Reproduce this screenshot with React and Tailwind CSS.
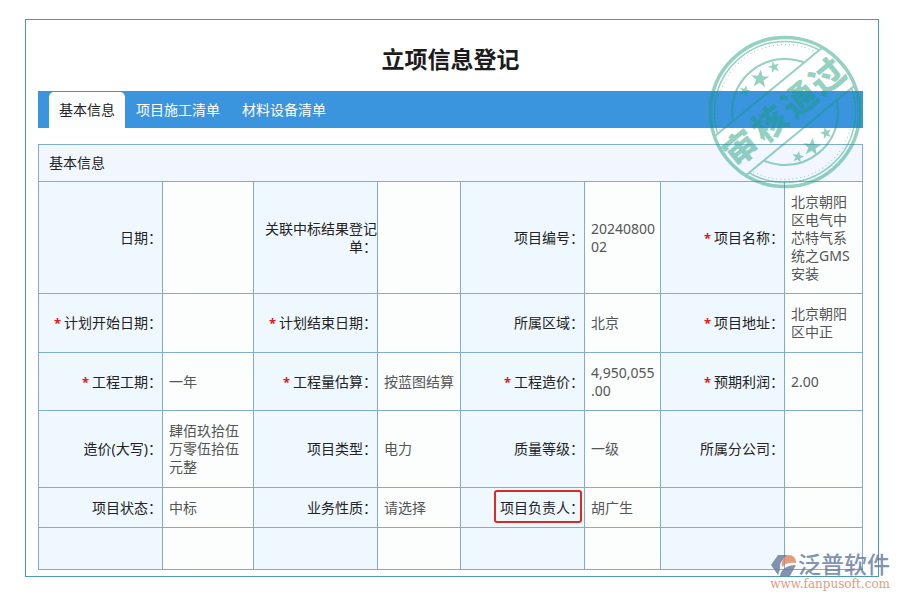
const tabs = ["基本信息", "项目施工清单", "材料设备清单"];

// each row holds four label / value pairs
const rows = [
  {
    height: "h-[112px]",
    cells: [
      { label: "日期：", value: "" },
      { label: "关联中标结果登记单：", value: "" },
      { label: "项目编号：", value: "2024080002" },
      { label: "项目名称：", value: "北京朝阳区电气中芯特气系统之GMS安装", required: true },
    ],
  },
  {
    height: "h-[59px]",
    cells: [
      { label: "计划开始日期：", value: "", required: true },
      { label: "计划结束日期：", value: "", required: true },
      { label: "所属区域：", value: "北京" },
      { label: "项目地址：", value: "北京朝阳区中正", required: true },
    ],
  },
  {
    height: "h-[58px]",
    cells: [
      { label: "工程工期：", value: "一年", required: true },
      { label: "工程量估算：", value: "按蓝图结算", required: true },
      // zero-width space lets the decimals drop to the next line
      { label: "工程造价：", value: "4,950,055\u200b.00", required: true },
      { label: "预期利润：", value: "2.00", required: true },
    ],
  },
  {
    height: "h-[77px]",
    cells: [
      { label: "造价(大写)：", value: "肆佰玖拾伍万零伍拾伍元整" },
      { label: "项目类型：", value: "电力" },
      { label: "质量等级：", value: "一级" },
      { label: "所属分公司：", value: "" },
    ],
  },
  {
    height: "h-[40px]",
    cells: [
      { label: "项目状态：", value: "中标" },
      { label: "业务性质：", value: "请选择" },
      { label: "项目负责人：", value: "胡广生", marked: true },
      { label: "", value: "" },
    ],
  },
  {
    height: "h-[42px]",
    cells: [
      { label: "", value: "" },
      { label: "", value: "" },
      { label: "", value: "" },
      { label: "", value: "" },
    ],
  },
];

const STAR = "M0 -10 L2.4 -3.2 L9.5 -3.1 L3.8 1.2 L5.9 8.1 L0 4 L-5.9 8.1 L-3.8 1.2 L-9.5 -3.1 L-2.4 -3.2 Z";

const Stamp = () => (
  <svg
    viewBox="-78 -78 156 156"
    className="pointer-events-none absolute right-[15px] top-[14px] size-[156px] opacity-45"
    fill="none"
    stroke="#169b78"
  >
    <defs>
      <clipPath id="outside-band">
        <path d="M-80 -80 H80 V-26 H-80 Z M-80 24 H80 V80 H-80 Z" />
      </clipPath>
    </defs>
    <circle r="74.5" strokeWidth="3.5" />
    <g transform="rotate(-39.5)">
      <g clipPath="url(#outside-band)">
        <circle r="70.5" strokeWidth="1.5" />
        <circle r="67.5" strokeWidth="1" strokeDasharray="1 3" />
        <circle r="53" strokeWidth="2" />
      </g>
      <path d="M-70 -26 H70 M-71 24 H71" strokeWidth="2" />
      <g
        textAnchor="middle"
        fill="#169b78"
        stroke="none"
        className="font-['Noto_Sans_CJK_SC',sans-serif] text-[34px] font-black"
      >
        <text x="-57" y="12">审</text>
        <text x="-19" y="12">核</text>
        <text x="19" y="12">通</text>
        <text x="55" y="12">过</text>
      </g>
    </g>
    <g fill="#169b78" stroke="none">
      <path d={STAR} transform="translate(-25 -33) scale(0.95) rotate(5)" />
      <path d={STAR} transform="translate(-11 -45) scale(0.62) rotate(-15)" />
      <path d={STAR} transform="translate(-40 -21) scale(0.6) rotate(15)" />
      <path d={STAR} transform="translate(27 35) scale(0.95) rotate(5)" />
      <path d={STAR} transform="translate(41 21) scale(0.62) rotate(-15)" />
      <path d={STAR} transform="translate(13 45) scale(0.62) rotate(10)" />
    </g>
  </svg>
);

const Watermark = () => (
  <div className="pointer-events-none absolute -bottom-[14px] -right-[12px] flex flex-col items-end gap-px opacity-80">
    <div className="flex items-center">
      <svg viewBox="0 0 27 24" className="h-6 w-[27px]">
        <path d="M7 2 H17 C12 6 9 9 9 13 C9 17 8 20 7 22 L0 12 Z" fill="#66789f" />
        <path d="M11 14 C10 7 13 3 18 2 C22 2 25 5 25 10 C19 9 14 10 11 14 Z" fill="#e0835c" />
        <path d="M9 23 C10 16 16 12 25 12 L19 23 Z" fill="#66789f" />
      </svg>
      <span className="font-['Liberation_Sans','Noto_Sans_CJK_SC',sans-serif] text-[23px] font-medium leading-6 text-[#66789f]">
        泛普软件
      </span>
    </div>
    <span className="font-['DejaVu_Serif',serif] text-[12px] leading-3 text-[#e0835c]">www.fanpusoft.com</span>
  </div>
);

const Pair = ({ label, value, required, marked }) => (
  <>
    <th scope="row" className="relative border border-[#7fadcb] bg-[#f0f8ff] p-0 text-right font-normal text-[#222]">
      {required && <span className="mr-[3px] text-[13px] font-bold text-[#e01818]">*</span>}
      {label}
      {marked && <span className="absolute bottom-1 left-[33px] right-[2px] top-[2px] rounded-[3px] border-2 border-[#d92b22]" />}
    </th>
    <td className="break-all border border-[#7fadcb] bg-[#fcfefe] py-0 pl-[6px] pr-1 text-[#555]">{value}</td>
  </>
);

const App = () => {
  return (
    <div className="bg-white pb-6 pl-[25px] pr-[21px] pt-[19px] font-['Noto_Sans','Noto_Sans_CJK_SC',sans-serif] text-sm leading-[18px]">
      <main className="relative border border-[#4a9bb0] pb-[6px] pl-3 pr-[15px]">
        <h1 className="pb-4 pt-[23px] text-center text-[23px] font-bold leading-8 text-[#1c1c1c]">立项信息登记</h1>

        <nav className="flex h-[37px] items-end bg-[#3a94de] pl-[11px]">
          {tabs.map((tab, i) => (
            <button
              key={tab}
              className={
                i === 0
                  ? "h-9 rounded-t-[5px] bg-[#fcfefe] px-[10px] text-[#222]"
                  : "h-9 px-[11px] text-white"
              }
            >
              {tab}
            </button>
          ))}
        </nav>

        <table className="mt-4 w-full table-fixed border-collapse">
          <colgroup>
            <col className="w-[124px]" />
            <col className="w-[91px]" />
            <col className="w-[124px]" />
            <col className="w-[83px]" />
            <col className="w-[124px]" />
            <col className="w-[76px]" />
            <col className="w-[124px]" />
            <col className="w-[78px]" />
          </colgroup>
          <thead>
            <tr className="h-[37px]">
              <th colSpan={8} className="border border-[#7fadcb] bg-[#f1f6ff] px-[10px] py-0 text-left font-normal text-[#222]">
                基本信息
              </th>
            </tr>
          </thead>
          <tbody>
            {rows.map((row, i) => (
              <tr key={i} className={row.height}>
                {row.cells.map((cell, j) => (
                  <Pair key={j} {...cell} />
                ))}
              </tr>
            ))}
          </tbody>
        </table>

        <Stamp />
        <Watermark />
      </main>
    </div>
  );
};

export default App;
